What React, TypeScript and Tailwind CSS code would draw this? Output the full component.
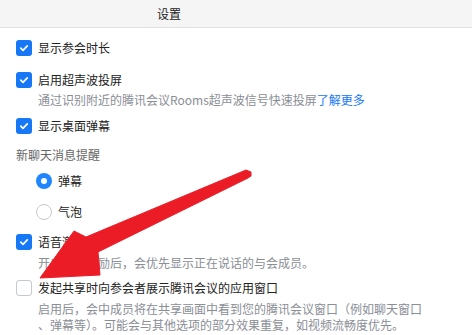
import React from 'react';

type RowProps = {
  checked: boolean;
  label: string;
  className?: string;
};

const Check = ({ checked }: { checked: boolean }) =>
  checked ? (
    <span className="flex h-4 w-4 shrink-0 items-center justify-center rounded-[3px] bg-[#1677f7]">
      <svg width="10" height="10" viewBox="0 0 10 10" fill="none">
        <path d="M1.8 5.2 4 7.3 8.3 2.9" stroke="#fff" strokeWidth="1.7" strokeLinecap="round" strokeLinejoin="round" />
      </svg>
    </span>
  ) : (
    <span className="h-4 w-4 shrink-0 rounded-[3px] border border-[#c5c9d0] bg-white" />
  );

const CheckRow = ({ checked, label, className }: RowProps) => (
  <div className={`flex h-5 items-center gap-[6px] pl-4 text-[12px] leading-5 text-[#222] ${className ?? ''}`}>
    <Check checked={checked} />
    <span>{label}</span>
  </div>
);

const Radio = ({ checked, label, className }: RowProps) => (
  <div className={`flex h-5 items-center gap-[6px] pl-9 text-[12px] leading-5 text-[#222] ${className ?? ''}`}>
    {checked ? (
      <span className="flex h-4 w-4 items-center justify-center rounded-full bg-[#1f86ff]">
        <span className="h-[6px] w-[6px] rounded-full bg-white" />
      </span>
    ) : (
      <span className="h-4 w-4 rounded-full border border-[#c5c9d0] bg-white" />
    )}
    <span>{label}</span>
  </div>
);

// hand-drawn red annotation arrow over the settings list
const Arrow = () => (
  <svg className="pointer-events-none absolute left-0 top-0" width="472" height="335" viewBox="0 0 472 335">
    <polygon
      points="40,278 74,231 86,237 246,170 251,172 251,176 248,178 98,252 100,275"
      fill="#ec1c27"
      strokeLinejoin="round"
      stroke="#ec1c27"
      strokeWidth="1"
    />
  </svg>
);

export default function App() {
  return (
    <div className="relative h-[335px] w-[472px] overflow-hidden bg-white font-['Noto_Sans_CJK_SC',sans-serif]">
      <div className="flex h-[28px] items-center border-b border-[#e1e1e1] bg-[#f5f5f5] pl-[157px] text-[12px] text-[#222]">
        设置
      </div>
      <div className="flex flex-col pt-[10px]">
        <CheckRow checked label="显示参会时长" />
        <CheckRow checked label="启用超声波投屏" className="mt-[12px]" />
        <p className="pl-[38px] text-[12px] leading-5 text-[#8a8e96]">
          通过识别附近的腾讯会议Rooms超声波信号快速投屏<span className="text-[#1677f7]">了解更多</span>
        </p>
        <CheckRow checked label="显示桌面弹幕" className="mt-[6px]" />
        <p className="mt-[9px] pl-4 text-[12px] leading-5 text-[#666]">新聊天消息提醒</p>
        <Radio checked label="弹幕" className="mt-[6px]" />
        <Radio checked={false} label="气泡" className="mt-[11px]" />
        <CheckRow checked label="语音激励" className="mt-[10px]" />
        <p className="mt-px pl-[38px] text-[12px] leading-5 text-[#8a8e96]">开启语音激励后，会优先显示正在说话的与会成员。</p>
        <CheckRow checked={false} label="发起共享时向参会者展示腾讯会议的应用窗口" className="mt-[5px]" />
        <div className="mt-[3px] pl-[38px] text-[12px] leading-4 text-[#8a8e96]">
          <p>启用后，会中成员将在共享画面中看到您的腾讯会议窗口（例如聊天窗口</p>
          <p>、弹幕等）。可能会与其他选项的部分效果重复，如视频流畅度优先。</p>
        </div>
      </div>
      <Arrow />
    </div>
  );
}
